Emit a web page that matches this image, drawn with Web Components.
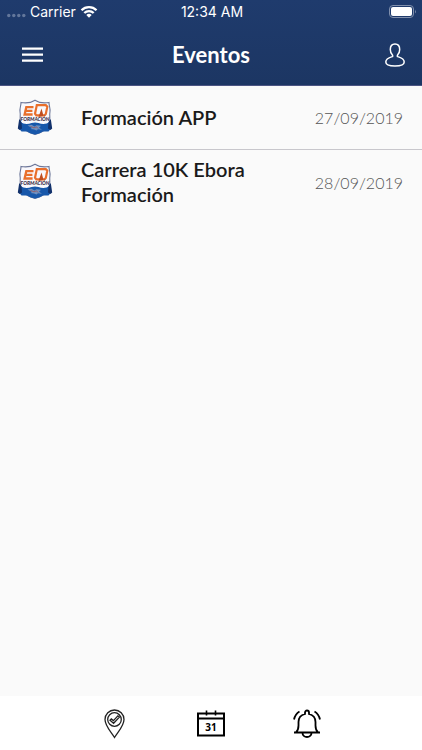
<!DOCTYPE html>
<html lang="es">
<head>
<meta charset="utf-8">
<meta name="viewport" content="width=device-width, initial-scale=1">
<title>Eventos</title>
<style>
    body {
        margin: 0;
        font-family: Lato, sans-serif;
        background: #fafafa;
        color: #1a1a1a;
    }
</style>
</head>
<body>
<events-app>
    <status-bar slot="top" carrier="Carrier" time="12:34 AM"></status-bar>
    <title-bar slot="top">Eventos</title-bar>
    <event-item date="27/09/2019">Formación APP</event-item>
    <event-item date="28/09/2019">Carrera 10K Ebora Formación</event-item>
    <tab-bar slot="bottom"></tab-bar>
</events-app>

<script>
/*
class EventsApp
page frame: blue header on top, list in the middle, tabs at the bottom
*/
class EventsApp extends HTMLElement {
    constructor() {
        super();
        this.attachShadow({mode: 'open'}).innerHTML = `
            <style>
                :host {
                    display: flex;
                    flex-direction: column;
                    min-height: 100vh;
                }
                header {
                    background: linear-gradient(#1f3b6d, #1c3663);
                    border-bottom: 1px solid #4c5583;
                    color: #fff;
                }
                main {
                    flex: 1;
                }
            </style>
            <header><slot name="top"></slot></header>
            <main><slot></slot></main>
            <slot name="bottom"></slot>
        `;
    }
}

/*
class StatusBar
carrier, clock and battery
*/
class StatusBar extends HTMLElement {
    constructor() {
        super();
        this.attachShadow({mode: 'open'}).innerHTML = `
            <style>
                :host {
                    display: grid;
                    grid-template-columns: 1fr auto 1fr;
                    align-items: center;
                    height: 23px;
                    padding: 0 5px 0 7px;
                    font: 14px/23px Inter, sans-serif;
                }
                .carrier {
                    display: flex;
                    align-items: center;
                    gap: 4px;
                }
                svg {
                    display: block;
                }
                .battery {
                    justify-self: end;
                }
            </style>
            <div class="carrier">
                <svg width="19" height="12" viewBox="0 0 19 12" fill="#63779b" aria-hidden="true">
                    <circle cx="1.8" cy="9.500" r="1.7"/><circle cx="6.8" cy="9.500" r="1.7"/>
                    <circle cx="11.8" cy="9.500" r="1.7"/><circle cx="16.8" cy="9.500" r="1.7"/>
                </svg>
                <span>${this.getAttribute('carrier')}</span>
                <svg width="18" height="13" viewBox="0 0 18 13" fill="none" stroke="#fff" stroke-width="2.3" aria-hidden="true">
                    <path d="M1.5 5.2a10.6 10.6 0 0 1 15 0M4.3 8a6.7 6.7 0 0 1 9.4 0"/>
                    <path d="M6.3 10.1a4 4 0 0 1 5.4 0L9 12.8z" fill="#fff" stroke="none"/>
                </svg>
            </div>
            <span>${this.getAttribute('time')}</span>
            <svg class="battery" width="28" height="13" viewBox="0 0 28 13" aria-hidden="true">
                <rect x=".5" y=".5" width="24" height="12" rx="3.5" fill="none" stroke="#8190ad"/>
                <rect x="2" y="2" width="21" height="9" rx="2" fill="#fff"/>
                <path d="M26 4.5q1.6 2 0 4z" fill="#8190ad"/>
            </svg>
        `;
    }
}

/*
class TitleBar
menu button, title (slot), profile button
*/
class TitleBar extends HTMLElement {
    constructor() {
        super();
        this.attachShadow({mode: 'open'}).innerHTML = `
            <style>
                :host {
                    display: grid;
                    grid-template-columns: 1fr auto 1fr;
                    align-items: center;
                    height: 60px;
                    padding: 2px 16px 0;
                }
                h1 {
                    margin: 0;
                    font-size: 22px;
                    line-height: 28px;
                    font-weight: 700;
                }
                button {
                    display: grid;
                    place-items: center;
                    width: 32px;
                    height: 32px;
                    padding: 0;
                    border: 0;
                    background: none;
                    color: inherit;
                }
                button:last-child {
                    justify-self: end;
                    width: 22px;
                }
            </style>
            <button type="button" aria-label="Menú">
                <svg width="21" height="16" viewBox="0 0 21 16" fill="currentColor">
                    <path d="M0 .4h21v2.400H0zM0 6.400h21v2.400H0zM0 12.400h21v2.400H0z"/>
                </svg>
            </button>
            <h1><slot></slot></h1>
            <button type="button" aria-label="Perfil">
                <svg width="22" height="24" viewBox="0 0 22 24" fill="none" stroke="currentColor" stroke-width="1.5">
                    <path d="M11 1C7.800 1 6.300 3.600 6.300 6.500c0 2.500 1 4.600 2.300 5.800v1.200C5.500 14.500 1.800 15.500 1.800 19c0 3 3.600 4 9.200 4s9.200-1 9.200-4c0-3.500-3.700-4.500-6.800-5.500v-1.200c1.300-1.200 2.300-3.300 2.300-5.800C15.700 3.600 14.200 1 11 1z"/>
                </svg>
            </button>
        `;
    }
}

/*
class ClubShield
logo shown next to each event
*/
class ClubShield extends HTMLElement {
    constructor() {
        super();
        this.attachShadow({mode: 'open'}).innerHTML = `
            <style>
                :host {
                    display: block;
                }
                svg {
                    display: block;
                }
                text {
                    font: italic 900 5px Lato, sans-serif;
                }
            </style>
            <svg width="36" height="38" viewBox="0 0 36 38" aria-hidden="true">
                <path d="M18 1.200C14.500 3.600 9.500 4.400 4 3.500 4 7 2.500 9.500 3 12.500 4 18 2 20 4 25c1.600 4.500 7 8.500 14 10.500 7-2 12.400-6 14-10.500 2-5 0-7 1-12.500.5-3-1-5.500-1-9-5.500.9-10.500.1-14-2.300z" fill="#f9f8fc" stroke="#6d7799" stroke-width="1.100"/>
                <path d="M3.500 23c3 2.300 7.500 2.300 11 1 2.500-.8 4.500-.8 7 0 3.500 1.300 8 1.300 11-1l2 6-3 3.500h-5.500C23.500 34 21 35 18 35.500c-3-.5-5.500-1.500-8-3H4.500l-3-3.500z" fill="#1757aa"/>
                <path d="M2.200 20l2.300 3 .5 6.500-2.500 1.500-1.700-1.500zM33.800 20l-2.300 3-.5 6.500 2.500 1.500 1.700-1.500z" fill="#12316b"/>
                <g fill="none" stroke="#e96f2c">
                    <path d="M16.500 8.200H9.300L7.600 15.500h8M8.400 11.800h7" stroke-width="2.300"/>
                    <path d="M19.800 6.200h9l1.500 1.500-1.500 7.300-1.500 1.300h-8l-1.300-1.500 1.500-7.200z" stroke-width="2.200"/>
                </g>
                <path d="M24.500 9.500l-3 8.500 5-1.200z" fill="#bf4e20"/>
                <text x="18" y="21.700" text-anchor="middle" fill="#3a2f4a">FORMACIÓN</text>
                <path d="M10.500 26.500l4-.8 3 1.800 2-1.300 4.500.5-2 2 3 2-4-.5-1.500 1.300-2.500-1-3.500-.4 1.500-1.200z" fill="#6e8fc0"/>
                <path d="M13.500 27.500l3.500 1.300 2.500-1 1.500 1.700" fill="none" stroke="#8d6270"/>
            </svg>
        `;
    }
}

/*
class EventItem
one row of the list: shield, name (slot), date
*/
class EventItem extends HTMLElement {
    constructor() {
        super();
        this.attachShadow({mode: 'open'}).innerHTML = `
            <style>
                :host {
                    display: flex;
                    align-items: center;
                    min-height: 64px;
                    box-sizing: border-box;
                    padding: 0 19px 0 17px;
                }
                :host(:not(:last-of-type)) {
                    border-bottom: 1px solid #c8c7cc;
                }
                h2 {
                    flex: 1;
                    margin: 0 28px;
                    font-size: 20px;
                    line-height: 25px;
                    font-weight: 600;
                }
                time {
                    font-size: 16px;
                    font-weight: 300;
                    color: #555;
                }
            </style>
            <club-shield></club-shield>
            <h2><slot></slot></h2>
            <time>${this.getAttribute('date')}</time>
        `;
    }
}

/*
class TabBar
places, calendar and notices
*/
class TabBar extends HTMLElement {
    constructor() {
        super();
        this.attachShadow({mode: 'open'}).innerHTML = `
            <style>
                :host {
                    display: block;
                    background: #fff;
                }
                nav {
                    display: flex;
                    justify-content: center;
                    gap: 64px;
                    padding: 11px 0;
                }
                button {
                    width: 32px;
                    height: 32px;
                    padding: 0;
                    border: 0;
                    background: none;
                }
                svg {
                    display: block;
                }
                text {
                    font: 700 10px "Open Sans", sans-serif;
                }
            </style>
            <nav>
                <button type="button" aria-label="Lugares">
                    <svg width="32" height="32" viewBox="0 0 32 32" fill="none" stroke="#222" stroke-width="1.300">
                        <path d="M15.500 30.500C12.500 25.500 6 19 6 12.500a9.500 9.500 0 0 1 19 0C25 19 18.500 25.500 15.500 30.500z"/>
                        <circle cx="15.500" cy="12.500" r="6.800"/>
                        <path d="M11 13.200l1.300-1.300 2.100 1.700 4.500-4.800 1.500 1.300-5.800 6.200z"/>
                    </svg>
                </button>
                <button type="button" aria-label="Calendario">
                    <svg width="32" height="32" viewBox="0 0 32 32" fill="none" stroke="#000" stroke-width="2">
                        <path d="M3 6.500h26V28.500H3zM3 11.500h26"/>
                        <path d="M11.500 3.500v5M20.500 3.500v5" stroke-width="1.600"/>
                        <text x="16" y="24" text-anchor="middle" fill="#000" stroke="none">31</text>
                    </svg>
                </button>
                <button type="button" aria-label="Avisos">
                    <svg width="32" height="32" viewBox="0 0 32 32" fill="none" stroke="#000" stroke-width="1.800">
                        <path d="M3 25.500h26M5 25.500c2-2 2.500-3.500 2.500-7V15c0-4 2.500-7 6.500-8V5.500a2 2 0 0 1 4 0V7c4 1 6.500 4 6.500 8v3.500c0 3.500.5 5 2.500 7M11.500 26a4.500 4 0 0 0 9 0"/>
                        <path d="M8.500 4.500C5.500 6.200 3.800 9 3 12.500M23.500 4.500c3 1.700 4.700 4.500 5.500 8"/>
                    </svg>
                </button>
            </nav>
        `;
    }
}

window.customElements.define('events-app', EventsApp);
window.customElements.define('status-bar', StatusBar);
window.customElements.define('title-bar', TitleBar);
window.customElements.define('club-shield', ClubShield);
window.customElements.define('event-item', EventItem);
window.customElements.define('tab-bar', TabBar);
</script>
</body>
</html>
